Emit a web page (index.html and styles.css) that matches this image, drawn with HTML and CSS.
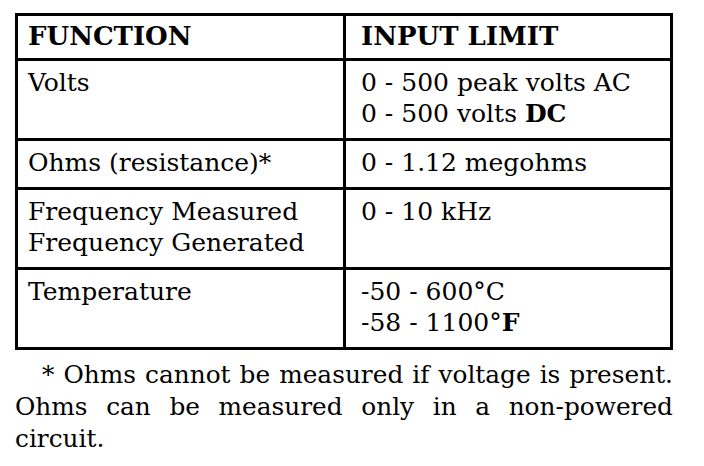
FILE: index.html
```html
<!DOCTYPE html>
<html lang="en">
<head>
    <meta charset="UTF-8">
    <meta name="viewport" content="width=device-width, initial-scale=1.0">
    <title>Input Limits</title>
    <link rel="stylesheet" href="styles.css">
</head>
<body>
    <div class="sheet">
        <table class="limits">
            <thead>
                <tr>
                    <th class="col-func">FUNCTION</th>
                    <th class="col-limit">INPUT LIMIT</th>
                </tr>
            </thead>
            <tbody>
                <tr>
                    <td>Volts</td>
                    <td class="col-limit">0 - 500 peak volts AC<br>0 - 500 volts <b>DC</b></td>
                </tr>
                <tr>
                    <td>Ohms (resistance)*</td>
                    <td class="col-limit">0 - 1.12 megohms</td>
                </tr>
                <tr>
                    <td>Frequency Measured<br>Frequency Generated</td>
                    <td class="col-limit">0 - 10 kHz</td>
                </tr>
                <tr>
                    <td>Temperature</td>
                    <td class="col-limit">-50 - 600°C<br>-58 - 1100°<b>F</b></td>
                </tr>
            </tbody>
        </table>
        <div class="note">
            <div class="note-first note-full">* Ohms cannot be measured if voltage is present.</div>
            <div class="note-full">Ohms can be measured only in a non-powered</div>
            <div>circuit.</div>
        </div>
    </div>
</body>
</html>
```

FILE: styles.css
```css
body {
    margin: 0;
    padding: 13px 0 0 15px;
    background-color: #fff;
    color: #000;
    font-family: "DejaVu Serif", "Liberation Serif", serif;
}
.sheet {
    width: 658px;
}
.limits {
    width: 100%;
    border-collapse: collapse;
    font-size: 25px;
}
.limits th, .limits td {
    border: 3px solid #000;
    text-align: left;
    vertical-align: top;
    padding: 6px 10px 9px 10px;
    line-height: 31px;
}
.limits th {
    font-size: 26px;
    font-weight: bold;
    padding: 5px 10px 6px 10px;
}
.limits .col-limit {
    padding-left: 15px;
}
.col-func {
    width: 305px;
}
.limits b {
    font-weight: bold;
}
.note {
    margin-top: 9px;
    font-size: 24.8px;
    line-height: 32px;
}
.note-first {
    text-indent: 27px;
}
.note-full {
    text-align: justify;
    text-align-last: justify;
}
```
